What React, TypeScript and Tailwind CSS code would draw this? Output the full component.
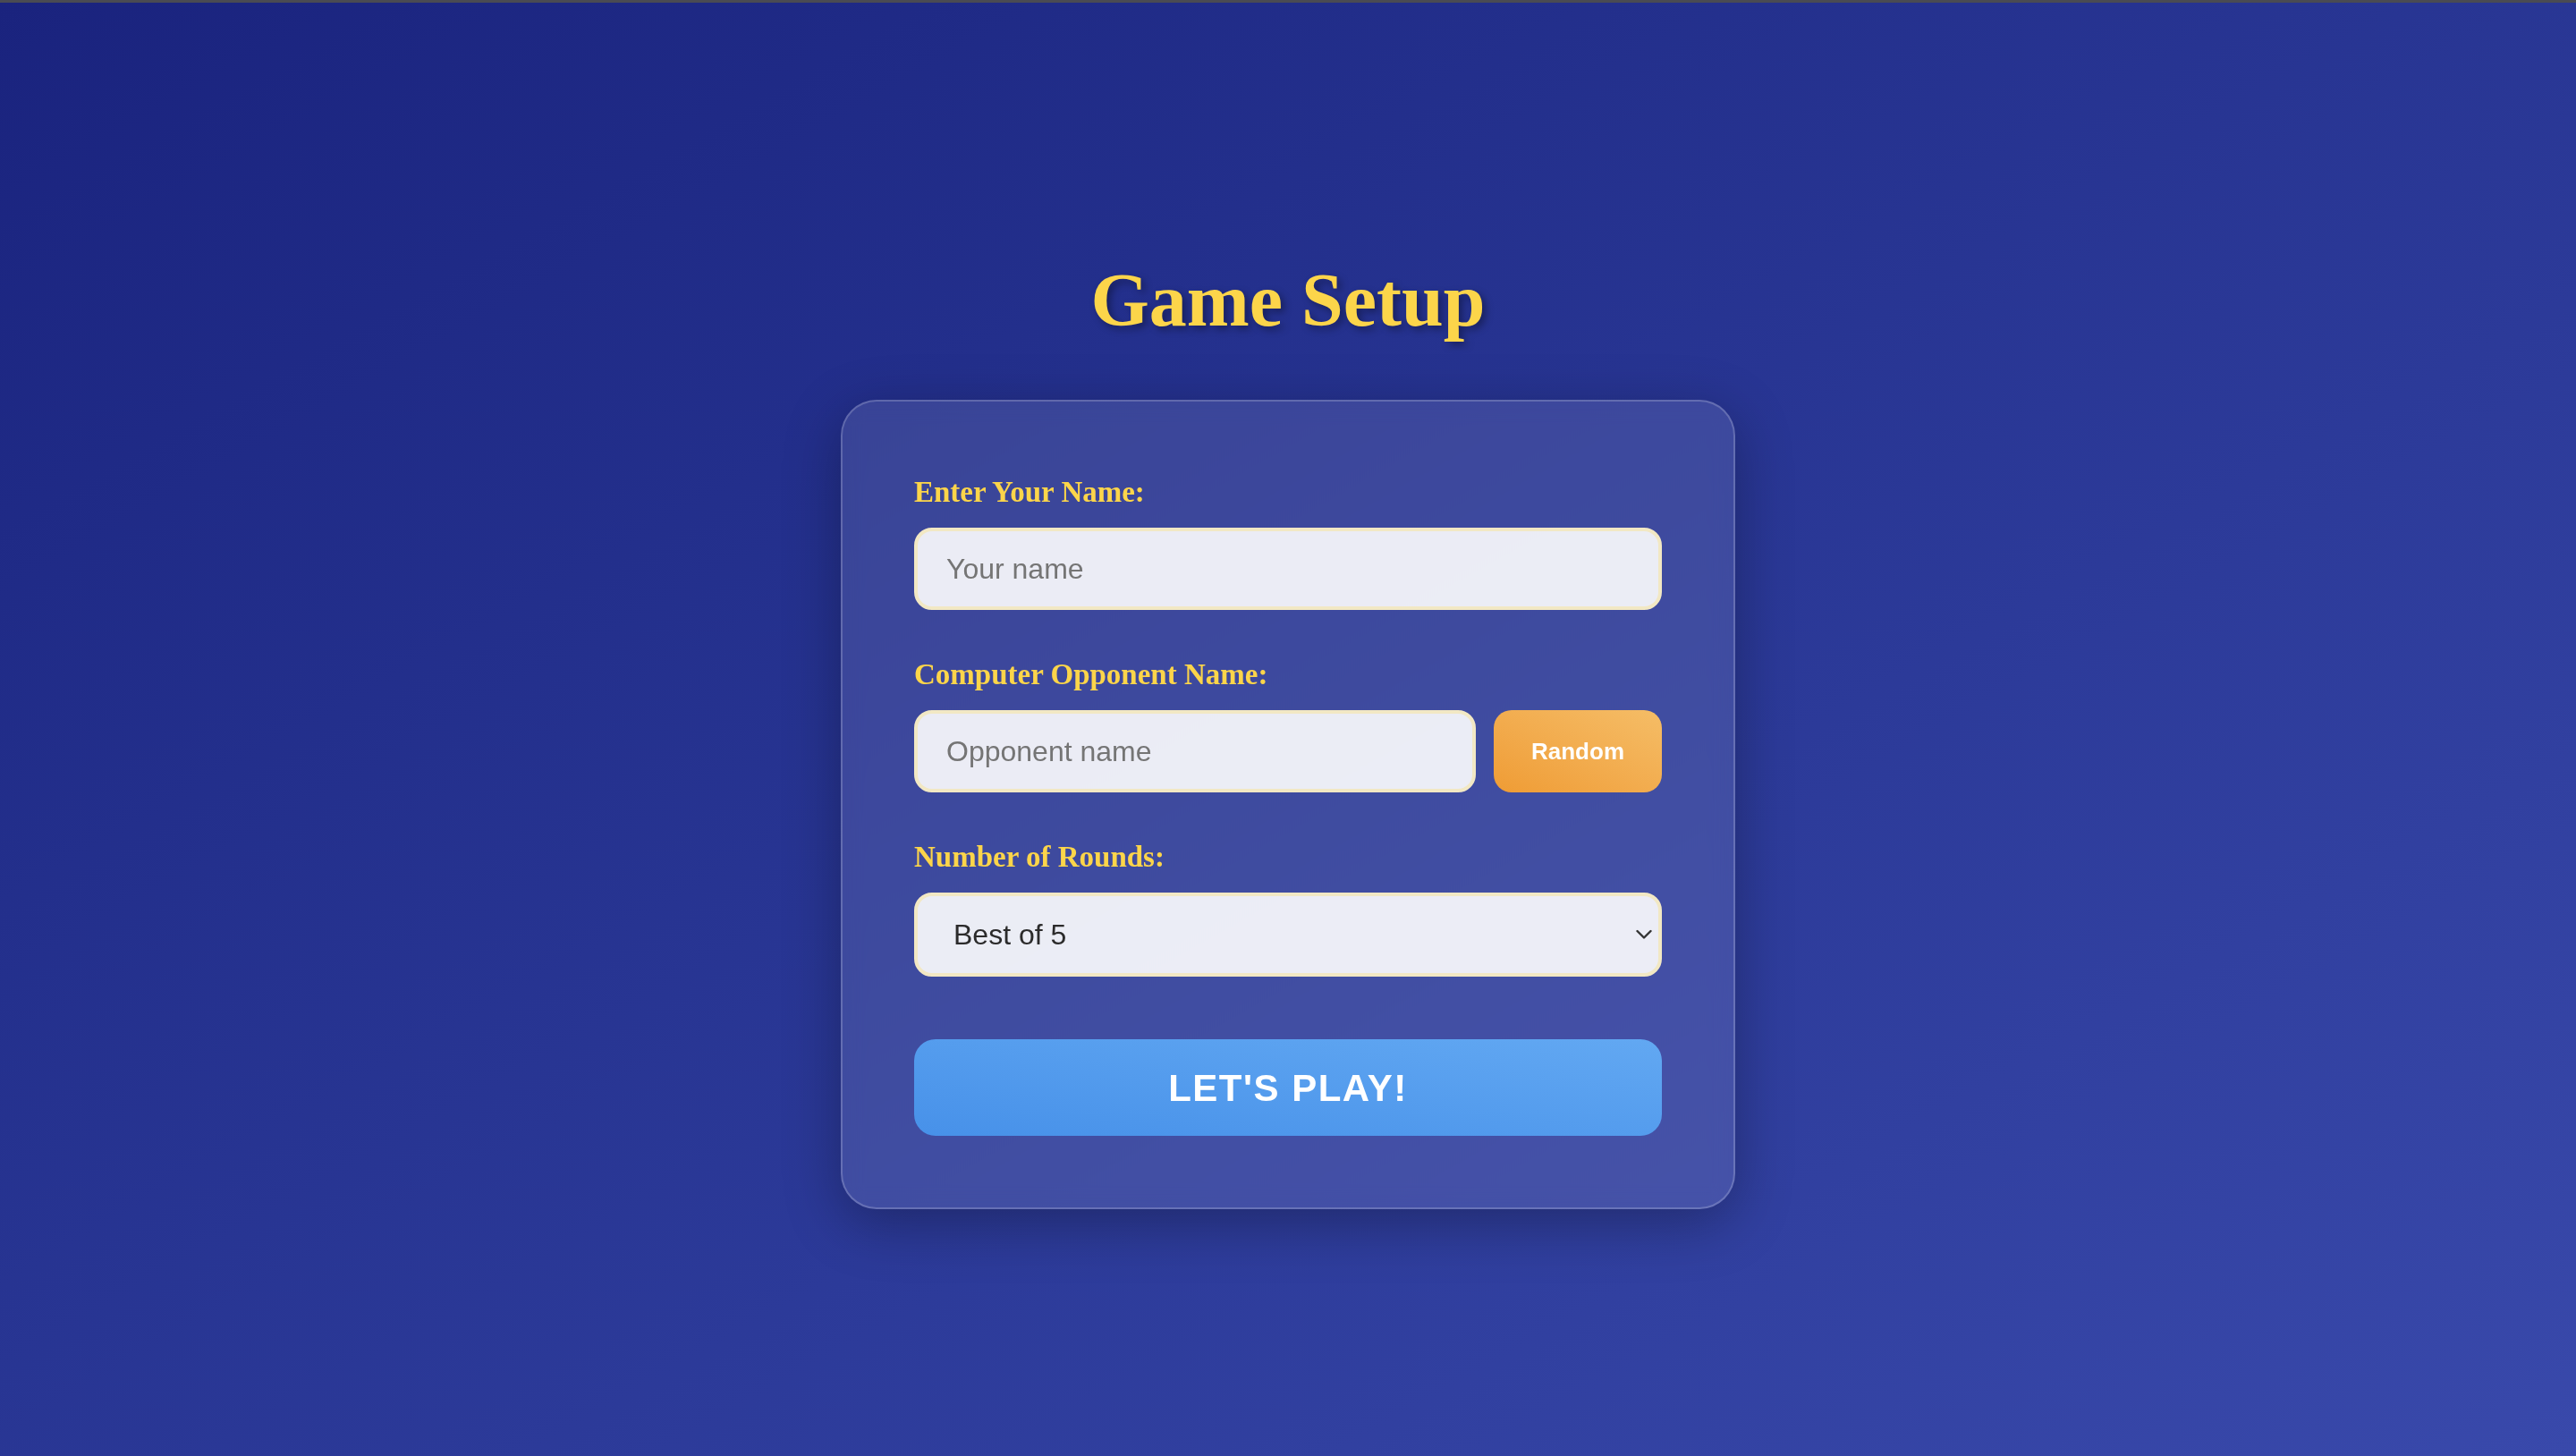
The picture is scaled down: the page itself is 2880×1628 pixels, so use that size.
import React from "react";

export default function App() {
  const serif = "font-['Liberation_Serif','Times_New_Roman',serif]";
  const sans = "font-['Liberation_Sans',Arial,sans-serif]";
  const labelCls = `${serif} block text-[33px] leading-[37px] font-bold text-[#fcd54a] pt-[3px] mb-[21px]`;
  return (
    <div className="min-h-screen w-full flex flex-col bg-linear-to-br from-[#1a237e] to-[#3949ab]">
      <div className="h-[3px] w-full bg-[#4a4b53]" />
      <div className="flex flex-col items-center pt-[286px] pb-[200px]">
        <h1
          className={`${serif} text-[84px] leading-[93px] font-bold text-[#fcd54a] [text-shadow:4px_4px_8px_rgba(0,0,0,0.35)]`}
        >
          Game Setup
        </h1>
        <div className="mt-[65px] w-[1000px] rounded-[40px] border-2 border-white/20 bg-white/10 backdrop-blur-md shadow-[0_16px_64px_rgba(0,0,0,0.3)] px-[80px] pt-[80px] pb-[80px]">
          <div className="mb-[51px]">
            <label className={labelCls}>Enter Your Name:</label>
            <input
              type="text"
              placeholder="Your name"
              className={`${sans} block w-full h-[92px] rounded-[20px] border-[4px] border-[#f2e8c4] bg-white/90 px-[32px] text-[32px] text-[#222] placeholder:text-[#757575] outline-none`}
            />
          </div>
          <div className="mb-[51px]">
            <label className={labelCls}>Computer Opponent Name:</label>
            <div className="flex gap-[20px] h-[92px]">
              <input
                type="text"
                placeholder="Opponent name"
                className={`${sans} flex-1 min-w-0 h-full rounded-[20px] border-[4px] border-[#f2e8c4] bg-white/90 px-[32px] text-[32px] text-[#222] placeholder:text-[#757575] outline-none`}
              />
              <button
                className={`${sans} w-[188px] h-full rounded-[20px] bg-linear-to-tr from-[#ef9c34] to-[#f5bd66] text-white text-[26px] font-bold`}
              >
                Random
              </button>
            </div>
          </div>
          <div>
            <label className={labelCls}>Number of Rounds:</label>
            <div className="relative">
              <select
                defaultValue="5"
                className={`${sans} block w-full h-[94px] appearance-none rounded-[20px] border-[4px] border-[#f2e8c4] bg-white/90 pl-[40px] pr-[60px] text-[32px] text-[#2b2b2b] outline-none`}
              >
                <option value="1">Best of 1</option>
                <option value="3">Best of 3</option>
                <option value="5">Best of 5</option>
                <option value="7">Best of 7</option>
              </select>
              <svg
                className="pointer-events-none absolute right-[11px] top-1/2 -translate-y-1/2"
                width="18"
                height="11"
                viewBox="0 0 18 11"
                fill="none"
              >
                <path d="M1.5 1.5 L9 9 L16.5 1.5" stroke="#333" strokeWidth="2.4" strokeLinecap="round" strokeLinejoin="round" />
              </svg>
            </div>
          </div>
          <button
            className={`${sans} mt-[70px] block w-full h-[108px] rounded-[24px] bg-linear-to-tr from-[#4791e9] to-[#62a8f2] text-white text-[42px] font-bold tracking-[1.5px]`}
          >
            LET'S PLAY!
          </button>
        </div>
      </div>
    </div>
  );
}
